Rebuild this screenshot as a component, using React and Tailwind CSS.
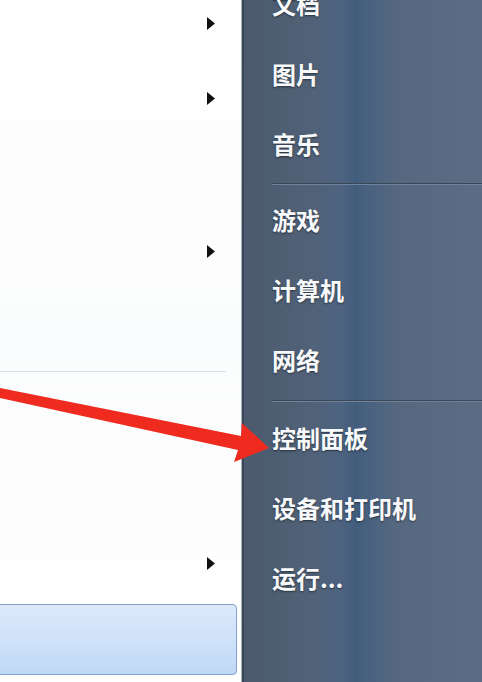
import React from "react";

const Arrow = () => (
  <svg width="8" height="13" viewBox="0 0 8 13" className="block">
    <polygon points="0,0 8,6.5 0,13" fill="#111" />
  </svg>
);

const Item = ({ label, h = "h-[70px]" }) => (
  <div className={`${h} flex items-center pl-[28px]`}>
    <span className="text-[24px] leading-none font-bold text-[#f7f9fb] [text-shadow:0_1px_2px_rgba(0,0,0,0.5)]">
      {label}
    </span>
  </div>
);

const Sep = ({ h }) => (
  <div className={`${h} flex flex-col justify-end pl-[28px]`}>
    <div className="h-px bg-[#3a4757]" />
    <div className="h-px bg-[#71839a]" />
  </div>
);

export default function App() {
  return (
    <div className="relative w-[482px] h-[682px] overflow-hidden flex font-['Noto_Sans_CJK_SC','Noto_Sans',sans-serif] bg-white">
      {/* left column */}
      <div className="w-[241px] flex flex-col bg-[linear-gradient(180deg,#ffffff_0%,#fbfcfd_50%,#ffffff_100%)]">
        <div className="h-[46px] flex items-center justify-end pr-[26px]">
          <Arrow />
        </div>
        <div className="h-[104px] flex items-center justify-end pr-[26px]">
          <Arrow />
        </div>
        <div className="h-[202px] flex items-center justify-end pr-[26px]">
          <Arrow />
        </div>
        <div className="h-[19px]" />
        <div className="h-px bg-[#d6dee9] mr-[15px]" />
        <div className="h-[154px]" />
        <div className="h-[74px] flex items-center justify-end pr-[26px]">
          <Arrow />
        </div>
        <div className="h-[4px]" />
        <div className="h-[71px] ml-[-6px] mr-[4px] rounded-[4px] border border-[#7ea1cc] bg-[linear-gradient(180deg,#dde9fb_0%,#cfe2f9_50%,#c0d8f5_100%)]" />
      </div>

      {/* divider */}
      <div className="w-px bg-[#a7b1bd]" />
      <div className="w-[2px] bg-[#3b4757]" />

      {/* right column */}
      <div className="flex-1 flex flex-col bg-[linear-gradient(90deg,#4b5a6d_0%,#516278_28%,#4d6380_41%,#425d7c_47%,#4a627f_53%,#56687f_65%,#5b6c84_100%)]">
        <div className="mt-[-31px]">
          <Item label="文档" />
          <Item label="图片" />
          <Item label="音乐" />
          <Sep h="h-[6px]" />
          <Item label="游戏" />
          <Item label="计算机" />
          <Item label="网络" />
          <Sep h="h-[7px]" />
          <Item label="控制面板" h="h-[71px]" />
          <Item label="设备和打印机" />
          <Item label="运行..." />
        </div>
      </div>

      {/* red annotation arrow */}
      <svg
        className="absolute left-0 top-0 pointer-events-none"
        width="482"
        height="682"
        viewBox="0 0 482 682"
      >
        <polygon
          points="0,388 241,436 242,423 269,448 234,462 238,450 0,398"
          fill="#ef2a1f"
        />
      </svg>
    </div>
  );
}
